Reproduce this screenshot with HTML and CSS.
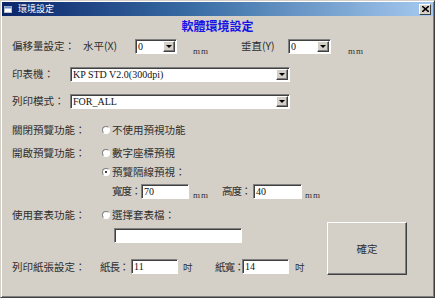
FILE: index.html
```html
<!DOCTYPE html>
<html lang="zh-Hant">
<head>
  <meta charset="UTF-8" />
  <title>環境設定</title>
  <link rel="stylesheet" href="styles.css">
</head>
<body>
  <div class="window">
    <div class="titlebar">
      <svg class="app-icon" width="8" height="7" viewBox="0 0 8 7">
        <rect x="0.5" y="0.5" width="7" height="6" fill="#fff" stroke="#c0c0c0"/>
        <rect x="0.5" y="0.5" width="7" height="2" fill="#6c8fc8"/>
      </svg>
      <span class="title">環境設定</span>
      <div class="close-btn">
        <svg width="7" height="6" viewBox="0 0 7 6">
          <path d="M0 0 L7 6 M7 0 L0 6" stroke="#000" stroke-width="1.6"/>
        </svg>
      </div>
    </div>

    <div class="body">
      <h1 class="heading">軟體環境設定</h1>

      <div class="row row-top">
        <span class="label w71">偏移量設定：</span>
        <span class="label w52">水平(X)</span>
        <div class="combo w42"><span class="field-text">0</span><span class="combo-btn"></span></div>
        <span class="unit u1">mm</span>
        <span class="label w47">垂直(Y)</span>
        <div class="combo w43"><span class="field-text">0</span><span class="combo-btn"></span></div>
        <span class="unit u2">mm</span>
      </div>

      <div class="row row-top row-printer">
        <span class="label w58">印表機：</span>
        <div class="combo w220"><span class="field-text">KP STD V2.0(300dpi)</span><span class="combo-btn"></span></div>
      </div>

      <div class="row row-top row-mode">
        <span class="label w58">列印模式：</span>
        <div class="combo w220"><span class="field-text">FOR_ALL</span><span class="combo-btn"></span></div>
      </div>

      <div class="row row-radio r-close">
        <span class="label w89">關閉預覽功能：</span>
        <span class="radio"></span>
        <span class="opt">不使用預視功能</span>
      </div>

      <div class="row row-radio r-open">
        <span class="label w89">開啟預覽功能：</span>
        <span class="radio"></span>
        <span class="opt">數字座標預視</span>
      </div>

      <div class="row row-radio r-grid">
        <span class="label w89"></span>
        <span class="radio checked"></span>
        <span class="opt">預覽隔線預視：</span>
      </div>

      <div class="row row-radio r-size">
        <span class="label w29 indent">寬度：</span>
        <div class="textbox w48"><span class="field-text">70</span></div>
        <span class="unit u3">mm</span>
        <span class="label w31">高度：</span>
        <div class="textbox w49"><span class="field-text">40</span></div>
        <span class="unit u4">mm</span>
      </div>

      <div class="lower">
        <div class="lower-left">
          <div class="row row-radio r-form">
            <span class="label w89">使用套表功能：</span>
            <span class="radio"></span>
            <span class="opt">選擇套表檔：</span>
          </div>
          <div class="textbox file-box"></div>
          <div class="row r-paper">
            <span class="label w88">列印紙張設定：</span>
            <span class="label w31">紙長：</span>
            <div class="textbox w47"><span class="field-text">11</span></div>
            <span class="inch i1">吋</span>
            <span class="label w27">紙寬：</span>
            <div class="textbox w47"><span class="field-text">14</span></div>
            <span class="inch i2">吋</span>
          </div>
        </div>
        <button class="ok-btn">確定</button>
      </div>
    </div>
  </div>
</body>
</html>
```

FILE: styles.css
```css
body {
  margin: 0;
  padding: 0;
  width: 435px;
  height: 298px;
  overflow: hidden;
  background: #d4d0c8;
  font-family: "Noto Sans CJK TC", "Noto Sans", sans-serif;
  font-size: 10.5px;
  color: #2e2e2e;
}

.window {
  box-sizing: border-box;
  width: 435px;
  height: 298px;
  padding: 1px;
  background: #d4d0c8;
  border: 1px solid;
  border-color: #d4d0c8 #404040 #404040 #d4d0c8;
  box-shadow: inset 1px 1px #ffffff, inset -1px -1px #808080;
}

.titlebar {
  display: flex;
  align-items: center;
  height: 14px;
  padding-left: 2px;
  background: linear-gradient(90deg, #0a246a 0%, #3a6ea5 45%, #a6caf0 100%);
}

.app-icon {
  margin-right: 6px;
}

.title {
  color: #ffffff;
  font-size: 9px;
  line-height: 14px;
}

.close-btn {
  box-sizing: border-box;
  display: flex;
  align-items: center;
  justify-content: center;
  width: 12px;
  height: 11px;
  margin-left: auto;
  margin-right: 2px;
  background: #d4d0c8;
  border: 1px solid;
  border-color: #ffffff #404040 #404040 #ffffff;
}

.body {
  display: flex;
  flex-direction: column;
  padding: 0 10px;
}

.heading {
  margin: 0;
  height: 20px;
  line-height: 20px;
  text-align: center;
  font-size: 12px;
  font-weight: bold;
  color: #1414e6;
}

.row {
  display: flex;
  align-items: center;
  white-space: nowrap;
}

.row-top {
  height: 20px;
}

.row-printer {
  margin-top: 8px;
}

.row-mode {
  margin-top: 7px;
}

.row-radio {
  height: 18px;
}

.r-close { margin-top: 10px; }
.r-open { margin-top: 5px; }
.r-grid { margin-top: 1px; }
.r-size { margin-top: 1px; }
.r-form { margin-top: 6px; }

.label {
  flex: none;
  line-height: 14px;
  overflow: visible;
}

.w27 { width: 27px; }
.w29 { width: 29px; }
.w31 { width: 31px; }
.w42 { width: 42px; }
.w43 { width: 43px; }
.w47 { width: 47px; }
.w48 { width: 48px; }
.w49 { width: 49px; }
.w52 { width: 52px; }
.w58 { width: 58px; }
.w71 { width: 71px; }
.w88 { width: 88px; }
.w89 { width: 89px; }
.w220 { width: 220px; }

.indent {
  margin-left: 100px;
  letter-spacing: -1px;
}

.r-size .w31,
.r-paper .w31,
.r-paper .w27 {
  letter-spacing: -1px;
}

.combo,
.textbox {
  box-sizing: border-box;
  flex: none;
  display: flex;
  align-items: center;
  height: 15px;
  background: #ffffff;
  border: 1px solid;
  border-color: #808080 #ffffff #ffffff #808080;
  box-shadow: inset 1px 1px #404040;
}

.field-text {
  padding-left: 2px;
  font-family: "Liberation Serif", serif;
  font-size: 10px;
  line-height: 13px;
  color: #111;
}

.combo-btn {
  box-sizing: border-box;
  position: relative;
  width: 12px;
  height: 11px;
  margin-left: auto;
  margin-right: 1px;
  background: #d4d0c8;
  border: 1px solid;
  border-color: #ffffff #404040 #404040 #ffffff;
  box-shadow: inset -1px -1px #808080;
}

.combo-btn::after {
  content: "";
  position: absolute;
  left: 2px;
  top: 3px;
  border-left: 3px solid transparent;
  border-right: 3px solid transparent;
  border-top: 3px solid #000;
}

.unit {
  flex: none;
  align-self: flex-end;
  font-family: "Liberation Serif", serif;
  font-size: 9px;
  line-height: 10px;
  letter-spacing: 1px;
  color: #333;
}

.u1 { margin-left: 16px; width: 48px; }
.u2 { margin-left: 17px; }
.u3 { margin-left: 4px; width: 29px; }
.u4 { margin-left: 3px; }

.radio {
  box-sizing: border-box;
  flex: none;
  position: relative;
  width: 8px;
  height: 8px;
  margin-left: 1px;
  margin-right: 2px;
  border-radius: 50%;
  background: #ffffff;
  border: 1px solid;
  border-color: #808080 #ffffff #ffffff #808080;
}

.radio.checked::after {
  content: "";
  position: absolute;
  left: 2px;
  top: 2px;
  width: 2px;
  height: 2px;
  border-radius: 50%;
  background: #000;
}

.opt {
  line-height: 14px;
}

.lower {
  display: flex;
  align-items: flex-end;
}

.lower-left {
  display: flex;
  flex-direction: column;
  width: 315px;
}

.file-box {
  width: 128px;
  margin-top: 4px;
  margin-left: 102px;
}

.r-paper {
  height: 15px;
  margin-top: 16px;
}

.inch {
  flex: none;
  font-size: 9.5px;
  line-height: 14px;
}

.i1 { margin-left: 5px; width: 32px; }
.i2 { margin-left: 6px; }

.ok-btn {
  box-sizing: border-box;
  width: 80px;
  height: 53px;
  margin-bottom: -1px;
  padding: 0;
  font-family: inherit;
  font-size: 10.5px;
  color: #2e2e2e;
  background: #d4d0c8;
  border: 1px solid;
  border-color: #ffffff #404040 #404040 #ffffff;
  box-shadow: inset -1px -1px #808080;
}
```
